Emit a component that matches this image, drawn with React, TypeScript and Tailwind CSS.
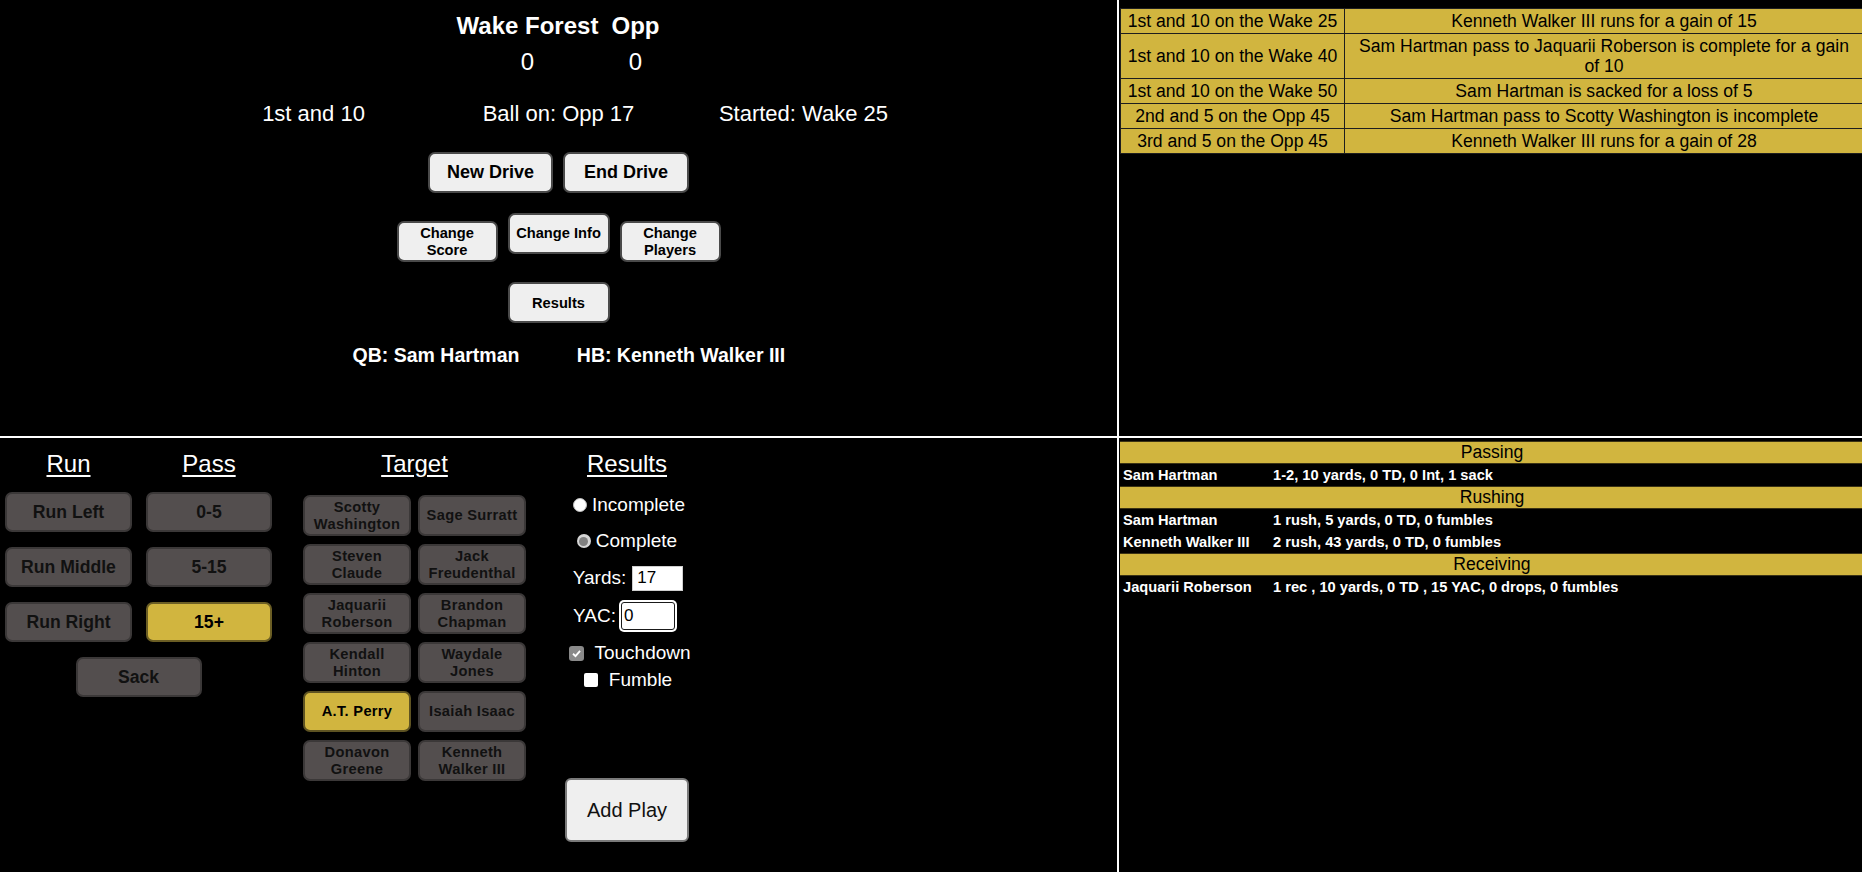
import React from 'react';

const plays = [
  ['1st and 10 on the Wake 25', 'Kenneth Walker III runs for a gain of 15'],
  ['1st and 10 on the Wake 40', 'Sam Hartman pass to Jaquarii Roberson is complete for a gain of 10'],
  ['1st and 10 on the Wake 50', 'Sam Hartman is sacked for a loss of 5'],
  ['2nd and 5 on the Opp 45', 'Sam Hartman pass to Scotty Washington is incomplete'],
  ['3rd and 5 on the Opp 45', 'Kenneth Walker III runs for a gain of 28'],
];

const stats: { title: string; rows: [string, string][] }[] = [
  { title: 'Passing', rows: [['Sam Hartman', '1-2, 10 yards, 0 TD, 0 Int, 1 sack']] },
  {
    title: 'Rushing',
    rows: [
      ['Sam Hartman', '1 rush, 5 yards, 0 TD, 0 fumbles'],
      ['Kenneth Walker III', '2 rush, 43 yards, 0 TD, 0 fumbles'],
    ],
  },
  { title: 'Receiving', rows: [['Jaquarii Roberson', '1 rec , 10 yards, 0 TD , 15 YAC, 0 drops, 0 fumbles']] },
];

const targets = [
  'Scotty Washington', 'Sage Surratt',
  'Steven Claude', 'Jack Freudenthal',
  'Jaquarii Roberson', 'Brandon Chapman',
  'Kendall Hinton', 'Waydale Jones',
  'A.T. Perry', 'Isaiah Isaac',
  'Donavon Greene', 'Kenneth Walker III',
];

const lightBtn =
  'bg-[#efefef] border-2 border-[#4a4a4a] rounded-[7px] text-black font-bold flex items-center justify-center text-center';
const grayBtn =
  'h-[40px] border-2 border-[#3b3838] rounded-[7px] font-bold text-[17.6px] flex items-center justify-center';

export default function App() {
  return (
    <div className="w-full h-[872px] bg-black text-white font-['Liberation_Sans',Arial,sans-serif] flex flex-col overflow-hidden">
      {/* Top half */}
      <div className="flex h-[438px] border-b-2 border-white">
        {/* Drive info */}
        <div className="w-[1119px] shrink-0 border-r-2 border-white flex flex-col items-center pt-[12px]">
          <div className="flex gap-[7px] pl-[1px]">
            <div className="w-[146px] text-center">
              <div className="text-[24px] leading-[28px] font-bold">Wake Forest</div>
              <div className="text-[24px] leading-[28px] mt-[8px]">0</div>
            </div>
            <div className="w-[56px] text-center">
              <div className="text-[24px] leading-[28px] font-bold">Opp</div>
              <div className="text-[24px] leading-[28px] mt-[8px]">0</div>
            </div>
          </div>

          <div className="flex mt-[25px] text-[22px] leading-[26px]">
            <div className="w-[245px] text-center">1st and 10</div>
            <div className="w-[245px] text-center">Ball on: Opp 17</div>
            <div className="w-[245px] text-center">Started: Wake 25</div>
          </div>

          <div className="flex gap-[10px] mt-[25px]">
            <button className={`${lightBtn} w-[125px] h-[41px] text-[18px]`}>New Drive</button>
            <button className={`${lightBtn} w-[126px] h-[41px] text-[18px]`}>End Drive</button>
          </div>

          <div className="flex items-start gap-[10px] mt-[20px] text-[14.67px] leading-[17px]">
            <button className={`${lightBtn} w-[101px] h-[41px] mt-[8px]`}>Change<br />Score</button>
            <button className={`${lightBtn} w-[102px] h-[41px]`}>Change Info</button>
            <button className={`${lightBtn} w-[101px] h-[41px] mt-[8px]`}>Change<br />Players</button>
          </div>

          <button className={`${lightBtn} w-[102px] h-[41px] mt-[20px] text-[14.67px]`}>Results</button>

          <div className="flex mt-[21px] text-[19.5px] leading-[22px] font-bold">
            <div className="w-[245px] text-center">QB: Sam Hartman</div>
            <div className="w-[245px] text-center">HB: Kenneth Walker III</div>
          </div>
        </div>

        {/* Play log */}
        <div className="flex-1 overflow-hidden pt-[8px] pl-[1px]">
          <table className="w-[744px] border border-[#1e1e1e] text-[17.6px] leading-[20px] text-black bg-[#d1b53f]">
            <tbody>
              {plays.map(([situation, result]) => (
                <tr key={situation + result}>
                  <td className="w-[224px] border border-[#1e1e1e] px-[2px] py-[2px] text-center">{situation}</td>
                  <td className="border border-[#1e1e1e] px-[7px] py-[2px] text-center">{result}</td>
                </tr>
              ))}
            </tbody>
          </table>
        </div>
      </div>

      {/* Bottom half */}
      <div className="flex flex-1">
        {/* Play entry */}
        <div className="w-[1119px] shrink-0 border-r-2 border-white flex items-start pt-[12px] pl-[5px]">
          {/* Run / Pass */}
          <div className="w-[267px] flex flex-col items-center">
            <div className="grid grid-cols-[127px_126px] gap-x-[14px] gap-y-[15px] w-full">
              <div className="text-center text-[24px] leading-[28px] underline underline-offset-[3px]">Run</div>
              <div className="text-center text-[24px] leading-[28px] underline underline-offset-[3px]">Pass</div>
              <button className={`${grayBtn} bg-[#534e4e] text-[#111] -mt-[1px]`}>Run Left</button>
              <button className={`${grayBtn} bg-[#534e4e] text-[#111] -mt-[1px]`}>0-5</button>
              <button className={`${grayBtn} bg-[#534e4e] text-[#111]`}>Run Middle</button>
              <button className={`${grayBtn} bg-[#534e4e] text-[#111]`}>5-15</button>
              <button className={`${grayBtn} bg-[#534e4e] text-[#111]`}>Run Right</button>
              <button className={`${grayBtn} bg-[#d1b53f] border-[#6b5e24] text-black`}>15+</button>
            </div>
            <button className={`${grayBtn} bg-[#534e4e] text-[#111] w-[126px] mt-[15px]`}>Sack</button>
          </div>

          {/* Target */}
          <div className="w-[223px] ml-[31px] flex flex-col items-center">
            <div className="text-[24px] leading-[28px] underline underline-offset-[3px]">Target</div>
            <div className="grid grid-cols-[108px_108px] gap-x-[7px] gap-y-[8px] mt-[17px]">
              {targets.map((name) => (
                <button
                  key={name}
                  className={`h-[41px] px-[6px] border-2 rounded-[7px] font-bold text-[14.67px] leading-[17px] text-center tracking-[0.3px] flex items-center justify-center ${
                    name === 'A.T. Perry'
                      ? 'bg-[#d1b53f] border-[#5e5322] text-black'
                      : 'bg-[#534e4e] border-[#3b3838] text-[#111]'
                  }`}
                >
                  {name}
                </button>
              ))}
            </div>
          </div>

          {/* Results */}
          <div className="w-[142px] ml-[30px] flex flex-col items-center text-[19px]">
            <div className="text-[24px] leading-[28px] underline underline-offset-[3px]">Results</div>
            <label className="h-[26px] mt-[14px] flex items-center gap-[5px] pl-[4px]">
              <span className="w-[14px] h-[14px] rounded-full bg-white border border-[#bdbdbd]" />
              Incomplete
            </label>
            <label className="h-[26px] mt-[10px] flex items-center gap-[5px]">
              <span className="w-[14px] h-[14px] rounded-full bg-[#d6d6d6] flex items-center justify-center">
                <span className="w-[9px] h-[9px] rounded-full bg-[#808080]" />
              </span>
              Complete
            </label>
            <div className="h-[26px] mt-[11px] flex items-center gap-[6px] pl-[2px]">
              <span>Yards:</span>
              <input
                readOnly
                value="17"
                className="w-[51px] h-[25px] bg-white text-black text-[17px] px-[4px] outline-none border border-[#cfcfcf]"
              />
            </div>
            <div className="h-[28px] mt-[11px] flex items-center gap-[5px] pr-[6px]">
              <span>YAC:</span>
              <input
                readOnly
                value="0"
                className="w-[54px] h-[28px] bg-white text-black text-[17px] px-[2px] border-[1.5px] border-[#1a1a1a] rounded-[3px] ring-2 ring-white outline-none"
              />
            </div>
            <label className="h-[24px] mt-[11px] flex items-center gap-[10px] pl-[6px]">
              <span className="w-[15px] h-[15px] rounded-[3px] bg-[#8a8a8a] flex items-center justify-center">
                <svg width="11" height="11" viewBox="0 0 12 12">
                  <path d="M2.2 6.3 L4.9 8.9 L9.9 3.2" fill="none" stroke="white" strokeWidth="2" />
                </svg>
              </span>
              Touchdown
            </label>
            <label className="h-[24px] mt-[3px] flex items-center gap-[11px] pl-[2px]">
              <span className="w-[14px] h-[14px] rounded-[2px] bg-white" />
              Fumble
            </label>
            <button className="mt-[86px] w-[124px] h-[64px] bg-[#efefef] border-2 border-[#7a7a7a] rounded-[6px] text-[20px] text-[#111]">
              Add Play
            </button>
          </div>
        </div>

        {/* Stats */}
        <div className="flex-1 overflow-hidden pt-[3px] pl-[1px]">
          <table className="w-[744px] text-[14.67px] leading-[18px]">
            <tbody>
              {stats.map((group) => (
                <React.Fragment key={group.title}>
                  <tr>
                    <td
                      colSpan={2}
                      className="bg-[#d1b53f] text-black text-center text-[17.6px] leading-[21px] border-y border-[#3a3214]"
                    >
                      {group.title}
                    </td>
                  </tr>
                  {group.rows.map(([player, line]) => (
                    <tr key={player}>
                      <td className="w-[150px] font-bold px-[3px] py-[2px] whitespace-nowrap">{player}</td>
                      <td className="font-bold px-[3px] py-[2px]">{line}</td>
                    </tr>
                  ))}
                </React.Fragment>
              ))}
            </tbody>
          </table>
        </div>
      </div>
    </div>
  );
}
